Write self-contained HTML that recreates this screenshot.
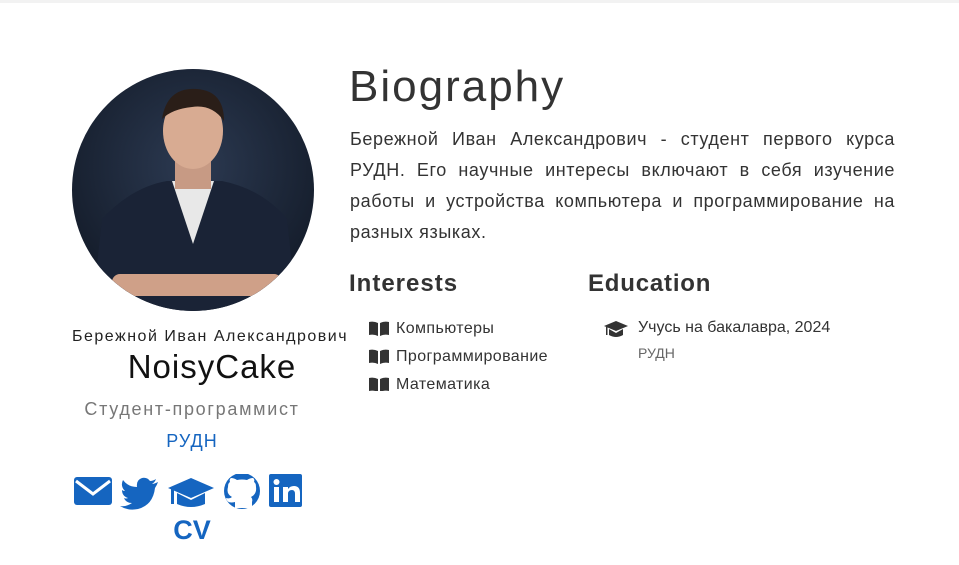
<!DOCTYPE html>
<html><head><meta charset="utf-8"><style>
body{margin:0;width:959px;height:565px;background:#fff;font-family:"Liberation Sans","DejaVu Sans",sans-serif;color:#333;position:relative;overflow:hidden}
.top{position:absolute;left:0;top:0;width:959px;height:3px;background:#f2f2f2}
.a{position:absolute;white-space:nowrap}
.ic{fill:#1565c0}
.ln{display:block;text-align:justify;text-align-last:justify;height:31px}
</style></head><body>
<div class="top"></div>
<svg class="a" style="left:72px;top:69px" width="242" height="242" viewBox="0 0 242 242">
<defs><clipPath id="c"><circle cx="121" cy="121" r="121"/></clipPath>
<radialGradient id="bg" cx="50%" cy="40%" r="60%"><stop offset="0" stop-color="#2c3a52"/><stop offset="1" stop-color="#141c2a"/></radialGradient></defs>
<g clip-path="url(#c)">
<rect width="242" height="242" fill="url(#bg)"/>
<path d="M20 242 L30 150 Q60 118 95 112 L150 112 Q190 120 215 150 L225 242Z" fill="#1a2336"/>
<path d="M100 112 L121 175 L142 112Z" fill="#e8e8e8"/>
<rect x="103" y="85" width="36" height="35" fill="#c79a84"/>
<ellipse cx="121" cy="62" rx="30" ry="38" fill="#d8ab92"/>
<path d="M90 50 Q95 18 125 20 Q152 22 152 52 Q140 35 120 38 Q100 40 90 50Z" fill="#2a1e18"/>
<rect x="40" y="205" width="170" height="22" rx="8" fill="#cfa088"/>
</g></svg>
<div class="a" style="left:72px;top:328px;font-size:16px;letter-spacing:1.5px;color:#222">Бережной Иван Александрович</div>
<div class="a" style="left:72px;width:280px;top:348px;text-align:center;font-size:33px;letter-spacing:1px;color:#111">NoisyCake</div>
<div class="a" style="left:52px;width:280px;top:399px;text-align:center;font-size:18px;letter-spacing:1.7px;color:#777">Студент-программист</div>
<div class="a" style="left:52px;width:280px;top:431px;text-align:center;font-size:18px;letter-spacing:1px;color:#1565c0">РУДН</div>
<svg class="a" style="left:74px;top:474px" width="230" height="36" viewBox="0 0 230 36">
<g class="ic">
<rect x="0" y="3" width="38" height="28" rx="3"/>
<path d="M2 7 L19 20 L36 7" stroke="#fff" stroke-width="3" fill="none"/>
<path d="M84 8 Q80 10 78 10 Q81 8 82 5 Q79 7 76 7 Q73 3 68 4 Q62 6 63 13 Q54 13 49 6 Q46 12 51 17 Q49 17 48 16 Q48 22 54 24 Q52 25 50 24 Q52 29 58 29 Q52 33 46 32 Q54 37 64 35 Q79 31 81 14 Q83 11 84 8Z"/>
<path d="M94 14 L117 4 L140 14 L117 24Z"/><path d="M103 19 L103 30 Q117 36 131 30 L131 19 L117 26Z"/><rect x="97" y="15" width="3" height="15"/>
<circle cx="168" cy="17" r="18"/>
<path d="M161 34 L161 28 Q153 30 152 24 Q156 25 158 23 Q152 20 154 13 Q154 9 156 8 Q155 5 157 4 Q160 4 163 6 Q168 5 173 6 Q176 4 179 4 Q181 5 180 8 Q182 9 182 13 Q183 20 177 23 Q179 25 178 28 L178 34Z" fill="#fff"/>
<rect x="195" y="0" width="33" height="33" rx="2"/>
<rect x="200" y="13" width="5" height="15" fill="#fff"/><circle cx="202.5" cy="8" r="3" fill="#fff"/>
<path d="M209 13 h5 v2 q2-3 6-3 q6 0 6 7 v9 h-5 v-8 q0-4-3-4 q-4 0-4 4 v8 h-5Z" fill="#fff"/>
</g></svg>
<div class="a" style="left:52px;width:280px;top:515px;text-align:center;font-size:27px;font-weight:bold;color:#1565c0">CV</div>
<div class="a" style="left:349px;top:62px;font-size:44px;letter-spacing:2px;color:#333">Biography</div>
<div class="a" style="left:350px;top:124px;width:545px;white-space:normal;font-size:18px;letter-spacing:0.6px;line-height:31px;color:#333">
<span class="ln">Бережной Иван Александрович - студент первого курса</span>
<span class="ln">РУДН. Его научные интересы включают в себя изучение</span>
<span class="ln">работы и устройства компьютера и программирование на</span>
<span style="display:block">разных языках.</span></div>
<div class="a" style="left:349px;top:270px;font-size:24px;font-weight:bold;letter-spacing:1px;color:#333">Interests</div>
<div class="a" style="left:588px;top:270px;font-size:24px;font-weight:bold;letter-spacing:0.8px;color:#333">Education</div>
<svg class="a" style="left:369px;top:321px" width="20" height="70" viewBox="0 0 20 70">
<g fill="#333"><path d="M0 1 Q5 0 9 2 L9 15 Q5 13 0 14Z M11 2 Q15 0 20 1 L20 14 Q15 13 11 15Z"/>
<path transform="translate(0,28)" d="M0 1 Q5 0 9 2 L9 15 Q5 13 0 14Z M11 2 Q15 0 20 1 L20 14 Q15 13 11 15Z"/>
<path transform="translate(0,56)" d="M0 1 Q5 0 9 2 L9 15 Q5 13 0 14Z M11 2 Q15 0 20 1 L20 14 Q15 13 11 15Z"/></g></svg>
<div class="a" style="left:396px;top:315px;font-size:16px;line-height:28px;letter-spacing:0.4px;color:#333">Компьютеры<br>Программирование<br>Математика</div>
<svg class="a" style="left:604px;top:320px" width="24" height="18" viewBox="0 0 24 18"><g fill="#333"><path d="M0 6 L12 1 L24 6 L12 11Z"/><path d="M5 9 L5 15 Q12 19 19 15 L19 9 L12 13Z"/><rect x="2" y="7" width="1.5" height="8"/></g></svg>
<div class="a" style="left:638px;top:319px;font-size:16px;color:#333">Учусь на бакалавра, 2024</div>
<div class="a" style="left:638px;top:345px;font-size:14px;color:#666">РУДН</div>
</body></html>
